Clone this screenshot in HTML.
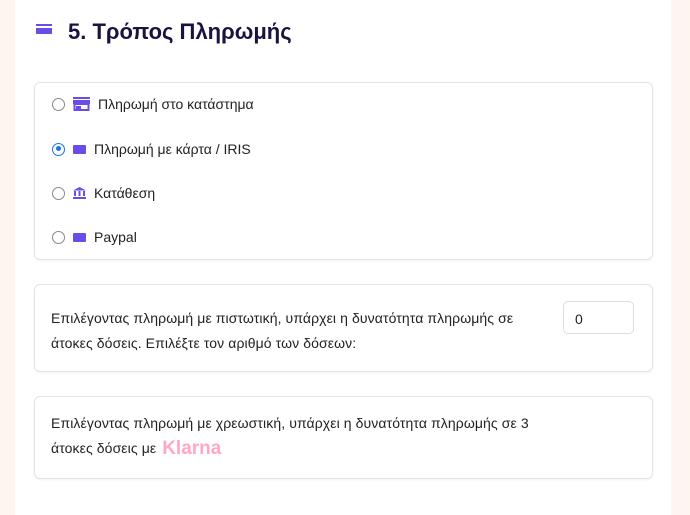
<!DOCTYPE html>
<html><head><meta charset="utf-8"><style>
body{margin:0;width:690px;height:515px;background:#fff;font-family:"Liberation Sans",sans-serif;position:relative;overflow:hidden;color:#1a1a2e}
.l{position:absolute;left:0;top:0;width:15px;height:515px;background:#fff5f0}
.r{position:absolute;left:671px;top:0;width:19px;height:515px;background:#fff5f0}
.box{position:absolute;left:34px;width:617px;border:1px solid #e4e4e4;border-radius:6px;box-shadow:0 1px 2px rgba(0,0,0,.05)}
h1{position:absolute;left:68px;top:19px;margin:0;font-size:22px;font-weight:bold;color:#1a1240}
.row{position:absolute;left:52px;height:20px;display:flex;align-items:center;font-size:14px;color:#222}
.rad{width:13px;height:13px;border:1px solid #888;border-radius:50%;box-sizing:border-box;margin-right:8px}
.rad.on{border:1.5px solid #1a73e8;position:relative}
.rad.on:after{content:"";position:absolute;left:2.5px;top:2.5px;width:5px;height:5px;border-radius:50%;background:#1a73e8}
.ic{width:13px;height:9px;background:#6a4de8;border-radius:1px;margin-right:8px}
.t{position:absolute;left:51px;font-size:14px;line-height:25px;color:#222;letter-spacing:0.1px}
</style></head><body>
<div class="l"></div><div class="r"></div>
<div style="position:absolute;left:36px;top:24px;width:16px;height:10px;background:#6a4de8"></div>
<div style="position:absolute;left:36px;top:26px;width:16px;height:2px;background:#fff"></div>
<h1>5. Τρόπος Πληρωμής</h1>
<div class="box" style="top:82px;height:176px"></div>
<div class="row" style="top:94px"><div class="rad"></div>
<svg width="17" height="14" viewBox="0 0 17 14" style="margin-right:8px"><rect x="0" y="0" width="17" height="2" fill="#6a4de8"/><rect x="0" y="3" width="17" height="4" fill="#6a4de8"/><rect x="1.5" y="7" width="14" height="6" fill="none" stroke="#6a4de8" stroke-width="2"/><rect x="3" y="9" width="5" height="5" fill="#6a4de8"/></svg>Πληρωμή στο κατάστημα</div>
<div class="row" style="top:139px"><div class="rad on"></div><div class="ic"></div>Πληρωμή με κάρτα / IRIS</div>
<div class="row" style="top:183px"><div class="rad"></div>
<svg width="13" height="12" viewBox="0 0 13 12" style="margin-right:8px"><path d="M6.5 0L0 3.5h13z" fill="#6a4de8"/><rect x="1" y="4" width="2" height="5" fill="#6a4de8"/><rect x="5.5" y="4" width="2" height="5" fill="#6a4de8"/><rect x="10" y="4" width="2" height="5" fill="#6a4de8"/><rect x="0" y="10" width="13" height="2" fill="#6a4de8"/></svg>Κατάθεση</div>
<div class="row" style="top:227px"><div class="rad"></div><div class="ic"></div>Paypal</div>
<div class="box" style="top:284px;height:86px"></div>
<div class="t" style="top:306px">Επιλέγοντας πληρωμή με πιστωτική, υπάρχει η δυνατότητα πληρωμής σε<br>άτοκες δόσεις. Επιλέξτε τον αριθμό των δόσεων:</div>
<div style="position:absolute;left:563px;top:301px;width:71px;height:33px;border:1px solid #ddd;border-radius:5px;box-sizing:border-box;font-size:14px;padding:9px 0 0 11px">0</div>
<div class="box" style="top:396px;height:81px"></div>
<div class="t" style="top:411px">Επιλέγοντας πληρωμή με χρεωστική, υπάρχει η δυνατότητα πληρωμής σε 3<br>άτοκες δόσεις με <span style="color:#ffa8c5;font-weight:bold;font-size:19px;vertical-align:-1px;margin-left:2px;letter-spacing:0">Klarna</span></div>
</body></html>
